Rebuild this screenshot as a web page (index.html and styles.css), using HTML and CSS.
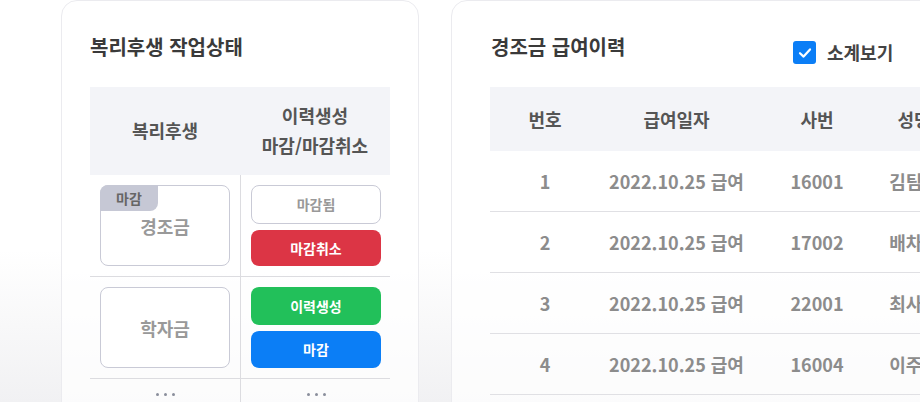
FILE: index.html
```html
<!DOCTYPE html>
<html lang="ko">
<head>
<meta charset="utf-8">
<link rel="stylesheet" href="styles.css">
</head>
<body>
<div class="page">
  <section class="card card-left">
    <h2 class="card-title">복리후생 작업상태</h2>
    <div class="wtable">
      <div class="wthead">
        <div class="wth">복리후생</div>
        <div class="wth">이력생성<br>마감/마감취소</div>
      </div>
      <div class="wrow">
        <div class="wcell">
          <div class="benefit">
            <span class="badge">마감</span>
            경조금
          </div>
        </div>
        <div class="wcell wcell-btns">
          <button class="btn btn-done">마감됨</button>
          <button class="btn btn-red">마감취소</button>
        </div>
      </div>
      <div class="wrow">
        <div class="wcell">
          <div class="benefit">학자금</div>
        </div>
        <div class="wcell wcell-btns">
          <button class="btn btn-green">이력생성</button>
          <button class="btn btn-blue">마감</button>
        </div>
      </div>
      <div class="wrow wrow-more">
        <div class="wcell more"><i></i><i></i><i></i></div>
        <div class="wcell more"><i></i><i></i><i></i></div>
      </div>
    </div>
  </section>

  <section class="card card-right">
    <div class="right-head">
      <h2 class="card-title">경조금 급여이력</h2>
      <label class="check">
        <span class="check-box">
          <svg width="14" height="12" viewBox="0 0 14 12"><path d="M2 6.2 L5.6 9.6 L12 2.4" fill="none" stroke="#fff" stroke-width="2.2" stroke-linecap="round" stroke-linejoin="round"/></svg>
        </span>
        소계보기
      </label>
    </div>
    <div class="htable">
      <div class="hrow hhead">
        <div class="hc c1">번호</div>
        <div class="hc c2">급여일자</div>
        <div class="hc c3">사번</div>
        <div class="hc c4">성명</div>
        <div class="hc c5">부서</div>
      </div>
      <div class="hrow">
        <div class="hc c1">1</div>
        <div class="hc c2">2022.10.25 급여</div>
        <div class="hc c3">16001</div>
        <div class="hc c4">김팀장</div>
        <div class="hc c5">인사팀</div>
      </div>
      <div class="hrow">
        <div class="hc c1">2</div>
        <div class="hc c2">2022.10.25 급여</div>
        <div class="hc c3">17002</div>
        <div class="hc c4">배차장</div>
        <div class="hc c5">총무팀</div>
      </div>
      <div class="hrow">
        <div class="hc c1">3</div>
        <div class="hc c2">2022.10.25 급여</div>
        <div class="hc c3">22001</div>
        <div class="hc c4">최사원</div>
        <div class="hc c5">영업팀</div>
      </div>
      <div class="hrow">
        <div class="hc c1">4</div>
        <div class="hc c2">2022.10.25 급여</div>
        <div class="hc c3">16004</div>
        <div class="hc c4">이주임</div>
        <div class="hc c5">개발팀</div>
      </div>
    </div>
  </section>
</div>
</body>
</html>
```

FILE: styles.css
```css
* { box-sizing: border-box; }
html, body {
  margin: 0;
  padding: 0;
  overflow: hidden;
  height: 402px;
}
html { background: #ffffff; }
body {
  font-family: "Noto Sans CJK KR", "Noto Sans", sans-serif;
  color: #333;
  background: linear-gradient(180deg, #ffffff 0px, #ffffff 250px, #f1f1f3 402px);
}
.page {
  display: flex;
  gap: 32px;
  padding: 0 0 0 61px;
  width: 1400px;
}
.card {
  background: rgba(255,255,255,0.72);
  border: 1px solid #ebebef;
  border-radius: 16px;
  height: 460px;
  flex: none;
}
.card-left {
  width: 358px;
  padding: 32px 28px 0 28px;
}
.card-right {
  width: 760px;
  padding: 32px 38px 0 38px;
}
.card-title {
  margin: 0 0 26px 0;
  font-size: 20px;
  line-height: 28px;
  font-weight: 700;
  color: #3a3a3a;
}
.right-head {
  display: grid;
  grid-template-columns: 303px auto;
  align-items: start;
}
.right-head .card-title { padding-left: 1px; }
.check {
  display: flex;
  align-items: center;
  gap: 11px;
  font-size: 18px;
  font-weight: 700;
  color: #444;
  margin-top: 8px;
  line-height: 23px;
}
.check-box {
  width: 23px;
  height: 23px;
  border-radius: 3px;
  background: #0b7ef6;
  display: flex;
  align-items: center;
  justify-content: center;
}

/* left table */
.wtable { width: 300px; }
.wthead {
  display: grid;
  grid-template-columns: 150px 150px;
  background: #f3f4f8;
  height: 88px;
}
.wth {
  display: flex;
  align-items: center;
  justify-content: center;
  text-align: center;
  font-size: 18px;
  line-height: 30px;
  font-weight: 700;
  color: #555;
  padding-bottom: 2px;
}
.wrow {
  display: grid;
  grid-template-columns: 150px 150px;
  border-bottom: 1px solid #dcdce0;
}
.wcell {
  padding: 10px 9px 10px 10px;
  height: 101px;
}
.wcell + .wcell { border-left: 1px solid #dcdce0; }
.benefit {
  position: relative;
  height: 81px;
  width: 130px;
  border: 1px solid #c9cad6;
  border-radius: 8px;
  background: #fff;
  display: flex;
  align-items: center;
  justify-content: center;
  font-size: 18px;
  font-weight: 700;
  color: #999;
}
.badge {
  position: absolute;
  left: -1px;
  top: -1px;
  width: 58px;
  height: 26px;
  background: #c6c8d5;
  border-radius: 8px 0 8px 0;
  font-size: 14px;
  font-weight: 700;
  color: #666;
  line-height: 26px;
  text-align: center;
}
.wcell-btns {
  display: flex;
  flex-direction: column;
  gap: 6px;
}
.btn {
  flex: 1;
  border: none;
  border-radius: 8px;
  font-family: inherit;
  font-size: 14px;
  font-weight: 700;
  color: #fff;
  padding: 0;
  width: 130px;
}
.btn-done {
  background: #fff;
  border: 1px solid #c9cad6;
  color: #999;
}
.btn-red { background: #dc3545; }
.btn-green { background: #22c05a; }
.btn-blue { background: #0b7ef6; }
.wrow-more { border-bottom: none; }
.wrow-more .wcell { height: 40px; }
.more {
  display: flex;
  justify-content: center;
  gap: 5px;
  padding-top: 14px;
}
.more i {
  width: 3px;
  height: 3px;
  border-radius: 50%;
  background: #8a8e9c;
}

/* right table */
.htable { width: 700px; }
.hrow {
  display: grid;
  grid-template-columns: 110px 153px 128px 66px 120px;
  height: 61px;
  border-bottom: 1px solid #e0e0e4;
  align-items: center;
}
.hhead {
  height: 64px;
  background: #f3f4f8;
  border-bottom: none;
}
.hc {
  text-align: center;
  font-size: 18px;
  font-weight: 700;
  color: #8c8c8c;
  white-space: nowrap;
}
.hhead .hc {
  font-size: 18px;
  color: #555;
}
```
